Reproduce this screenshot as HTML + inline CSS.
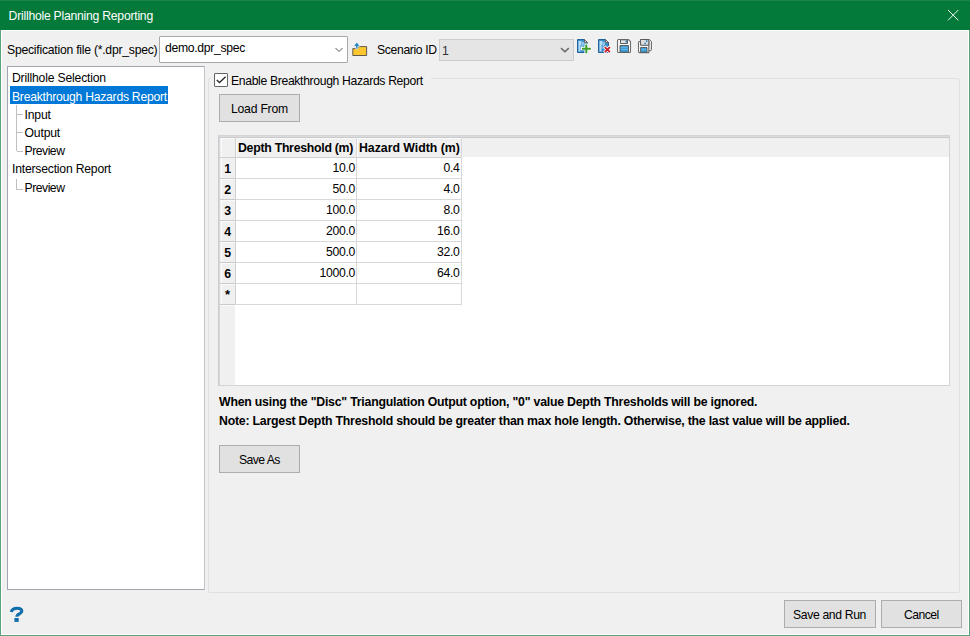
<!DOCTYPE html>
<html><head><meta charset="utf-8">
<style>
*{margin:0;padding:0;box-sizing:border-box}
html,body{width:970px;height:636px;overflow:hidden;background:#f0f0f0;font-family:"Liberation Sans",sans-serif;color:#000}
.a{position:absolute}
.t{position:absolute;white-space:pre;line-height:1;font-size:12.2px;letter-spacing:-0.3px}
.b{font-weight:bold;font-size:12.3px;letter-spacing:-0.22px}
.btn{position:absolute;background:#e1e1e1;border:1px solid #adadad}
</style></head><body>
<!-- title bar -->
<div class="a" style="left:0;top:0;width:970px;height:30px;background:#047a3a"></div>
<div class="t" style="left:8.6px;top:9.51px;color:#fff;font-size:12.2px;letter-spacing:-0.24px">Drillhole Planning Reporting</div>
<svg class="a" style="left:946px;top:8px" width="14" height="14"><path d="M2 2L12.3 12.3M12.3 2L2 12.3" stroke="#eef6f1" stroke-width="1"/></svg>
<div class="a" style="left:0;top:0;width:970px;height:1px;background:#1a854b"></div>
<!-- window border -->
<div class="a" style="left:0;top:30px;width:1px;height:606px;background:#5aa47b"></div>
<div class="a" style="left:969px;top:30px;width:1px;height:606px;background:#5aa47b"></div>
<div class="a" style="left:0;top:635px;width:970px;height:1px;background:#5aa47b"></div>
<div class="a" style="left:1px;top:30px;width:968px;height:1px;background:#fff"></div>
<div class="a" style="left:1px;top:30px;width:1px;height:605px;background:#fff"></div>
<div class="a" style="left:968px;top:30px;width:1px;height:605px;background:#fff"></div>
<div class="a" style="left:1px;top:634px;width:968px;height:1px;background:#fff"></div>

<!-- spec row -->
<div class="t" style="left:7px;top:43.51px;letter-spacing:-0.24px">Specification file (*.dpr_spec)</div>
<div class="a" style="left:159px;top:36px;width:189px;height:27px;background:#fff;border:1px solid #a8a8a8;border-radius:1px"></div>
<div class="t" style="left:165px;top:41.81px">demo.dpr_spec</div>
<svg class="a" style="left:334px;top:46px" width="10" height="8"><path d="M1.5 2L5 5.5L8.5 2" fill="none" stroke="#555" stroke-width="1"/></svg>
<!-- folder icon -->
<svg class="a" style="left:351px;top:41px" width="18" height="16">
  <path d="M1.8 7.6H6.6L7.6 5.6H15.6V14.5H1.8Z" fill="#fcc72e" stroke="#5e5b4c" stroke-width="1"/>
  <path d="M5.8 1.2L2.6 5.2H4.8V8H6.8V5.2H9Z" fill="#1b7dbf" stroke="#fff" stroke-width="0.8" stroke-opacity="0.8"/>
</svg>
<div class="t" style="left:377px;top:43.81px;letter-spacing:-0.35px">Scenario ID</div>
<div class="a" style="left:439px;top:39px;width:135px;height:22px;background:#e5e5e5;border:1px solid #cccccc"></div>
<div class="t" style="left:442px;top:45.21px;color:#333">1</div>
<svg class="a" style="left:559px;top:46px" width="12" height="8"><path d="M2 2.1L5.9 5.7L9.8 2.1" fill="none" stroke="#6a6a6a" stroke-width="1.5"/></svg>

<!-- toolbar icons -->
<svg class="a" style="left:576px;top:38px" width="16" height="16">
 <path d="M1.5 1.5H8.5L11.5 4.5V14.5H1.5Z" fill="#3b8fcb" stroke="#22639a" stroke-width="1"/>
 <path d="M2.5 3H5.5V6L4.5 7.5V13.5H2.5Z" fill="#b7dcf3"/>
 <path d="M5.5 4H8V7L6.5 8V11H5.5Z" fill="#8cc6ea"/>
 <path d="M8.5 1.5V4.5H11.5Z" fill="#e8e8e8" stroke="#666" stroke-width="1"/>
 <path d="M5 10.5H15.5M10.25 5.5V15.8" stroke="#fff" stroke-width="3.6"/>
 <path d="M6 10.8H14.8M10.3 6.6V15.2" stroke="#3f9f2c" stroke-width="2"/>
</svg>
<svg class="a" style="left:597px;top:38px" width="16" height="16">
 <path d="M1.5 1.5H8.5L11.5 4.5V14.5H1.5Z" fill="#3b8fcb" stroke="#22639a" stroke-width="1"/>
 <path d="M2.5 3H5.5V6L4.5 7.5V13.5H2.5Z" fill="#b7dcf3"/>
 <path d="M5.5 4H8V7L6.5 8V11H5.5Z" fill="#8cc6ea"/>
 <path d="M8.5 1.5V4.5H11.5Z" fill="#e8e8e8" stroke="#666" stroke-width="1"/>
 <path d="M7.3 8.6L13.3 14.6M13.3 8.6L7.3 14.6" stroke="#fff" stroke-width="3.4"/>
 <path d="M7.8 9.1L12.9 14.2M12.9 9.1L7.8 14.2" stroke="#c8202a" stroke-width="1.9"/>
</svg>
<svg class="a" style="left:616px;top:38px" width="16" height="16">
 <path d="M2.5 1.5H12.5L14.5 3.5V13.5Q14.5 14.5 13.5 14.5H2.5Q1.5 14.5 1.5 13.5V2.5Q1.5 1.5 2.5 1.5Z" fill="#fafafa" stroke="#707070" stroke-width="1.1"/>
 <path d="M4.5 1.8H11.5V5.5H4.5Z" fill="#e6e6e6" stroke="#5a5a5a" stroke-width="1"/>
 <path d="M9.5 2.6H10.9V4.6H9.5Z" fill="#1a7cc4"/>
 <path d="M4 7.5H12.5V14.2H4Z" fill="#3f9fd8" stroke="#555" stroke-width="0.9"/>
 <path d="M5 9.5H11.5M5 11.5H11.5" stroke="#62b4e6" stroke-width="0.8"/>
</svg>
<svg class="a" style="left:637px;top:38px" width="16" height="16">
 <path d="M3.5 1.5H12.5L14.5 3.5V11.5Q14.5 12.8 13 12.8H11.5V1.5Z" fill="#e4e4e4" stroke="#707070" stroke-width="1"/>
 <path d="M2.5 3.5H11.8V14.6H2.5Q1.5 14.6 1.5 13.6V4.5Q1.5 3.5 2.5 3.5Z" fill="#fafafa" stroke="#6e6e6e" stroke-width="1.1"/>
 <path d="M3.6 1.5H11.8V7.3H3.6Z" fill="#dcdcdc" stroke="#5a5a5a" stroke-width="1"/>
 <path d="M4.5 2.6H6V3.6H4.5ZM6.8 4.2H8.3V6H6.8Z" fill="#f6f6f6"/>
 <circle cx="9.7" cy="3.1" r="0.9" fill="#1a7cc4"/>
 <circle cx="8.1" cy="5.4" r="0.9" fill="#1a7cc4"/>
 <path d="M3.6 9.5H10V14.3H3.6Z" fill="#3f9fd8" stroke="#555" stroke-width="0.9"/>
 <path d="M4.5 11.5H9.2" stroke="#6cb8e6" stroke-width="0.7"/>
</svg>

<!-- tree -->
<div class="a" style="left:7px;top:66px;width:198px;height:524px;background:#fff;border:1px solid #a2a5ae;border-right-color:#c3c6cc"></div>
<div class="a" style="left:10px;top:86px;width:158px;height:18px;background:#0078d7"></div>
<div class="t" style="left:12px;top:72.31px;letter-spacing:-0.19px">Drillhole Selection</div>
<div class="t" style="left:12px;top:90.51px;color:#fff;letter-spacing:-0.26px">Breakthrough Hazards Report</div>
<div class="t" style="left:24.6px;top:108.61px;letter-spacing:-0.2px">Input</div>
<div class="t" style="left:24.6px;top:126.81px;letter-spacing:-0.2px">Output</div>
<div class="t" style="left:24.6px;top:144.91px;letter-spacing:-0.5px">Preview</div>
<div class="t" style="left:12px;top:163.41px;letter-spacing:-0.21px">Intersection Report</div>
<div class="t" style="left:24.6px;top:181.91px;letter-spacing:-0.5px">Preview</div>

<div class="a" style="left:16px;top:105px;width:1px;height:46px;background:#c0c0c0"></div>
<div class="a" style="left:17px;top:114px;width:6px;height:1px;background:#c0c0c0"></div>
<div class="a" style="left:17px;top:132px;width:6px;height:1px;background:#c0c0c0"></div>
<div class="a" style="left:17px;top:151px;width:6px;height:1px;background:#c0c0c0"></div>
<div class="a" style="left:16px;top:179px;width:1px;height:11px;background:#c0c0c0"></div>
<div class="a" style="left:17px;top:189px;width:6px;height:1px;background:#c0c0c0"></div>
<!-- group box -->
<div class="a" style="left:208px;top:78px;width:752px;height:515px;border:1px solid #e0e0e0;border-radius:2px"></div>
<div class="a" style="left:211px;top:72px;width:220px;height:14px;background:#f0f0f0"></div>
<div class="a" style="left:214px;top:73px;width:14px;height:14px;background:#fff;border:1px solid #646464;border-radius:1px"></div>
<svg class="a" style="left:214px;top:73px" width="14" height="14"><path d="M2.8 7.1L5.5 9.6L11.6 3.7" fill="none" stroke="#2b2b2b" stroke-width="1.35"/></svg>
<div class="t" style="left:231px;top:75.31px;letter-spacing:-0.34px">Enable Breakthrough Hazards Report</div>

<div class="btn" style="left:219px;top:94px;width:81px;height:28px"></div>
<div class="t" style="left:231px;top:102.81px;letter-spacing:-0.22px">Load From</div>

<!-- table -->
<div class="a" style="left:218px;top:135px;width:732px;height:251px;background:#fff;border:1px solid #d3d4d8;border-left-color:#cbcdd2"></div>
<div class="a" style="left:219px;top:136px;width:730px;height:1px;background:#dadbde"></div>
<div class="a" style="left:219px;top:137px;width:730px;height:1px;background:#cbcbcb"></div>
<div class="a" style="left:219px;top:136px;width:1px;height:249px;background:#d6d7d9"></div>
<div class="a" style="left:220px;top:138px;width:729px;height:19px;background:#f0f0f0"></div>
<div class="a" style="left:220px;top:138px;width:15px;height:247px;background:#f0f0f0"></div>
<div class="a" style="left:221px;top:138px;width:240px;height:1px;background:#fafafa"></div>
<div class="a" style="left:221px;top:138px;width:1px;height:166px;background:#fafafa"></div>
<div class="a" style="left:236px;top:138px;width:1px;height:19px;background:#fafafa"></div>
<div class="a" style="left:357px;top:138px;width:1px;height:19px;background:#fafafa"></div>
<div class="a" style="left:219px;top:157px;width:242px;height:1px;background:#d0d0d0"></div>
<div class="a" style="left:235px;top:137px;width:1px;height:168px;background:#d0d0d0"></div>
<div class="a" style="left:356px;top:137px;width:1px;height:168px;background:#d8d8d8"></div>
<div class="a" style="left:461px;top:137px;width:1px;height:168px;background:#d8d8d8"></div>
<div class="a" style="left:219px;top:178px;width:242px;height:1px;background:#d8d8d8"></div>
<div class="a" style="left:220px;top:178px;width:15px;height:1px;background:#cacaca"></div>
<div class="a" style="left:221px;top:179px;width:14px;height:1px;background:#fafafa"></div>
<div class="a" style="left:219px;top:199px;width:242px;height:1px;background:#d8d8d8"></div>
<div class="a" style="left:220px;top:199px;width:15px;height:1px;background:#cacaca"></div>
<div class="a" style="left:221px;top:200px;width:14px;height:1px;background:#fafafa"></div>
<div class="a" style="left:219px;top:220px;width:242px;height:1px;background:#d8d8d8"></div>
<div class="a" style="left:220px;top:220px;width:15px;height:1px;background:#cacaca"></div>
<div class="a" style="left:221px;top:221px;width:14px;height:1px;background:#fafafa"></div>
<div class="a" style="left:219px;top:241px;width:242px;height:1px;background:#d8d8d8"></div>
<div class="a" style="left:220px;top:241px;width:15px;height:1px;background:#cacaca"></div>
<div class="a" style="left:221px;top:242px;width:14px;height:1px;background:#fafafa"></div>
<div class="a" style="left:219px;top:262px;width:242px;height:1px;background:#d8d8d8"></div>
<div class="a" style="left:220px;top:262px;width:15px;height:1px;background:#cacaca"></div>
<div class="a" style="left:221px;top:263px;width:14px;height:1px;background:#fafafa"></div>
<div class="a" style="left:219px;top:283px;width:242px;height:1px;background:#d8d8d8"></div>
<div class="a" style="left:220px;top:283px;width:15px;height:1px;background:#cacaca"></div>
<div class="a" style="left:221px;top:284px;width:14px;height:1px;background:#fafafa"></div>
<div class="a" style="left:219px;top:304px;width:242px;height:1px;background:#d8d8d8"></div>
<div class="a" style="left:220px;top:304px;width:15px;height:1px;background:#cacaca"></div>
<div class="a" style="left:221px;top:305px;width:14px;height:1px;background:#fafafa"></div>
<div class="t b" style="left:238px;top:141.72px;letter-spacing:-0.27px">Depth Threshold (m)</div>
<div class="t b" style="left:359px;top:141.72px;letter-spacing:-0.01px">Hazard Width (m)</div>
<div class="t b" style="left:219px;width:17px;text-align:center;top:163.02px">1</div>
<div class="t" style="right:615px;top:162.41px">10.0</div>
<div class="t" style="right:510.5px;top:162.41px">0.4</div>
<div class="t b" style="left:219px;width:17px;text-align:center;top:184.02px">2</div>
<div class="t" style="right:615px;top:183.41px">50.0</div>
<div class="t" style="right:510.5px;top:183.41px">4.0</div>
<div class="t b" style="left:219px;width:17px;text-align:center;top:205.02px">3</div>
<div class="t" style="right:615px;top:204.41px">100.0</div>
<div class="t" style="right:510.5px;top:204.41px">8.0</div>
<div class="t b" style="left:219px;width:17px;text-align:center;top:226.02px">4</div>
<div class="t" style="right:615px;top:225.41px">200.0</div>
<div class="t" style="right:510.5px;top:225.41px">16.0</div>
<div class="t b" style="left:219px;width:17px;text-align:center;top:247.02px">5</div>
<div class="t" style="right:615px;top:246.41px">500.0</div>
<div class="t" style="right:510.5px;top:246.41px">32.0</div>
<div class="t b" style="left:219px;width:17px;text-align:center;top:268.02px">6</div>
<div class="t" style="right:615px;top:267.41px">1000.0</div>
<div class="t" style="right:510.5px;top:267.41px">64.0</div>
<div class="t b" style="left:219px;width:17px;text-align:center;top:287.92px;font-size:13px">*</div>

<div class="t b" style="left:219px;top:396.22px">When using the "Disc" Triangulation Output option, "0" value Depth Thresholds will be ignored.</div>
<div class="t b" style="left:219px;top:415.32px">Note: Largest Depth Threshold should be greater than max hole length. Otherwise, the last value will be applied.</div>

<div class="btn" style="left:219px;top:445px;width:81px;height:28px"></div>
<div class="t" style="left:239px;top:454.06px;letter-spacing:-0.55px">Save As</div>

<!-- help -->
<svg class="a" style="left:6px;top:602px" width="22" height="24">
 <path d="M5.3 10C5.9 7.2 8.6 6.2 11.2 6.2C14.2 6.2 15.8 7.4 15.8 9.3C15.8 11.4 13 11.8 11.6 13.2C11 13.8 10.9 14.3 10.9 14.8" fill="none" stroke="#0f6eab" stroke-width="3.1"/>
 <rect x="8.4" y="16" width="4.3" height="3.9" fill="#0f6eab"/>
</svg>

<div class="btn" style="left:784px;top:600px;width:92px;height:28px"></div>
<div class="t" style="left:793px;top:609.31px;letter-spacing:-0.35px">Save and Run</div>
<div class="btn" style="left:881px;top:600px;width:81px;height:28px"></div>
<div class="t" style="left:904px;top:609.31px;letter-spacing:-0.55px">Cancel</div>
</body></html>
